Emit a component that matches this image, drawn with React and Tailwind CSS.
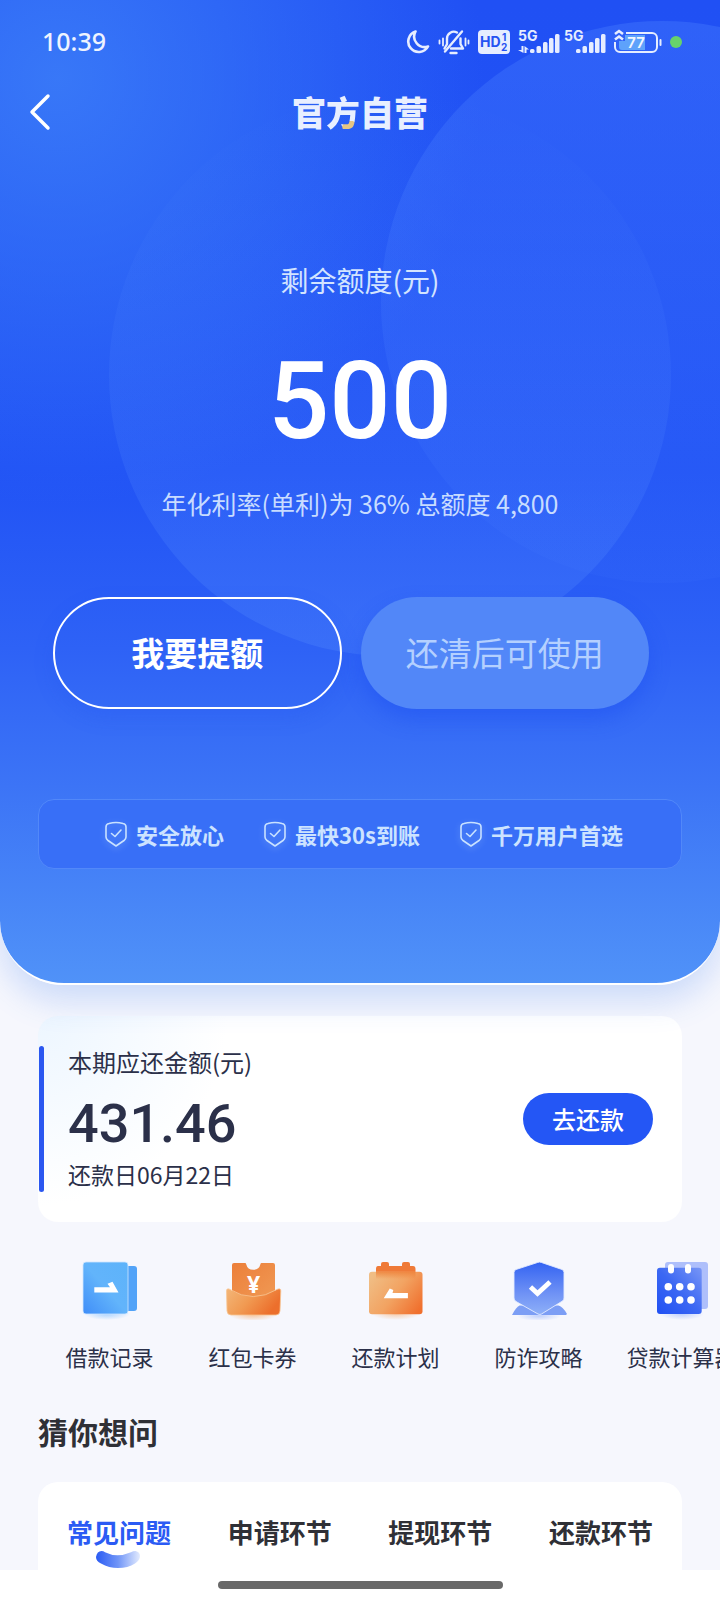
import { ChevronLeft } from "lucide-react";

const perks = ["安全放心", "最快30s到账", "千万用户首选"];

const tabs = ["常见问题", "申请环节", "提现环节", "还款环节"];

const services = [
  { label: "借款记录", Icon: RecordIcon },
  { label: "红包卡券", Icon: CouponIcon },
  { label: "还款计划", Icon: PlanIcon },
  { label: "防诈攻略", Icon: ShieldIcon },
  { label: "贷款计算器", Icon: CalculatorIcon },
];

/* ---------- status bar icons ---------- */

function MoonIcon() {
  return (
    <svg className="h-[26px] w-6" viewBox="0 0 24 26" fill="none">
      <path
        d="M9.500 2.500a10.500 10.500 0 1 0 12.500 15A10.500 10.500 0 0 1 9.500 2.500Z"
        stroke="#e6edff"
        strokeWidth="2.600"
        strokeLinejoin="round"
      />
    </svg>
  );
}

function MutedBellIcon() {
  return (
    <svg
      className="h-[26px] w-8"
      viewBox="0 0 32 26"
      fill="none"
      stroke="#e6edff"
      strokeWidth="2.400"
      strokeLinecap="round"
      strokeLinejoin="round"
    >
      <path d="M9 15V9.500a6.800 6.800 0 0 1 10-6" />
      <path d="M22.500 9.500V15l2.500 4.500H13" />
      <path d="M7 22.500L24 2.500" />
      <path d="M6.500 19.500l2-3.500" />
      <path d="M12.500 24h6" />
      <path d="M5 9.500v7M1.500 11.500v3M27.500 9.500v7M30.500 11.500v3" strokeWidth="1.800" />
    </svg>
  );
}

function HdIcon() {
  return (
    <svg className="h-6 w-8" viewBox="0 0 32 24">
      <rect x="0" y="0" width="32" height="24" rx="4" fill="#e6edff" />
      <g fill="#2553f2" fontFamily="Inter, sans-serif" fontWeight="700">
        <text x="2" y="17" fontSize="14">
          HD
        </text>
        <text x="24" y="11" fontSize="10">
          1
        </text>
        <text x="23" y="21" fontSize="10">
          2
        </text>
      </g>
    </svg>
  );
}

function SignalIcon({ data }) {
  return (
    <svg className="h-[26px] w-[42px] overflow-visible" viewBox="0 0 42 26" fill="#e6edff">
      <text
        x="0"
        y="12"
        fontSize="14"
        fontFamily="Inter, sans-serif"
        fontWeight="700"
      >
        5G
      </text>
      {data && (
        <path d="M3.500 17v4H0l5.500 3v-7ZM6.500 24v-7l4.500 3.500H8.500V24Z" />
      )}
      <rect x="12" y="20" width="4.500" height="4" rx="1.500" />
      <rect x="18.500" y="17" width="4.500" height="7" rx="1.500" />
      <rect x="25" y="13" width="4.500" height="11" rx="1.500" />
      <rect x="31" y="9" width="4.500" height="15" rx="1.500" />
      <rect x="37" y="5" width="4.500" height="19" rx="1.500" />
    </svg>
  );
}

function BatteryIcon() {
  return (
    <svg className="h-[26px] w-12" viewBox="0 0 48 26" fill="none">
      <path d="M11 6h20v15H8q-3 0-3-3v-6h6Z" fill="#5ea2fb" />
      <path
        d="M12 4h26a5 5 0 0 1 5 5v9a5 5 0 0 1-5 5H6a5 5 0 0 1-5-5v-5"
        stroke="#e6edff"
        strokeWidth="2"
      />
      <path d="M46.500 11v5" stroke="#e6edff" strokeWidth="2" strokeLinecap="round" />
      <path
        d="M1 5l4-3 4 3M1 10.500l4-3 4 3"
        stroke="#e6edff"
        strokeWidth="2.600"
      />
      <text
        x="22"
        y="19"
        fontSize="15"
        fontFamily="Inter, sans-serif"
        fontWeight="600"
        textAnchor="middle"
        fill="#f2f6ff"
      >
        77
      </text>
    </svg>
  );
}

/* ---------- page icons ---------- */

function PerkIcon() {
  return (
    <svg
      className="h-[26px] w-[22px] drop-shadow-[0_2px_3px_rgba(190,225,255,0.4)]"
      viewBox="0 0 22 26"
      fill="none"
      stroke="#c9e2ff"
      strokeWidth="1.600"
      strokeLinejoin="round"
      strokeLinecap="round"
    >
      <path d="M4 2.500Q11 .5 18 2.500Q21 3 21 6v10q0 2-2 3.500L11 25l-8-5.500Q1 18 1 16V6q0-3 3-3.500Z" />
      <path d="M6.500 12.500l3.500 3 6-6.500" />
    </svg>
  );
}

function RecordIcon() {
  return (
    <svg className="size-[60px]" viewBox="0 0 60 60">
      <defs>
        <linearGradient id="record" x1="0" y1="1" x2="1" y2="0">
          <stop offset="0" stopColor="#3f8df8" />
          <stop offset="0.500" stopColor="#62b4fb" />
          <stop offset="1" stopColor="#5db3fa" />
        </linearGradient>
        <radialGradient id="recordShadow">
          <stop offset="0" stopColor="#8cc4ff" stopOpacity="0.700" />
          <stop offset="1" stopColor="#8cc4ff" stopOpacity="0" />
        </radialGradient>
      </defs>
      <ellipse cx="27" cy="54" rx="23" ry="6" fill="url(#recordShadow)" />
      <rect x="44" y="6" width="13" height="45" rx="3" fill="#52a3f8" />
      <rect
        x="3"
        y="2"
        width="45"
        height="52"
        rx="3"
        fill="url(#record)"
        stroke="#cfe6ff"
        strokeWidth="0.800"
      />
      <path d="M14.300 27.300H30l-2.500-3.500 5-2 6 10.600H14.300Z" fill="#fff" />
    </svg>
  );
}

function CouponIcon() {
  return (
    <svg className="size-[60px]" viewBox="0 0 60 60">
      <defs>
        <linearGradient id="coupon" x1="0" y1="0" x2="1" y2="1">
          <stop offset="0" stopColor="#ec7f3a" />
          <stop offset="1" stopColor="#f09a55" />
        </linearGradient>
        <linearGradient id="pocket" x1="0" y1="0" x2="1" y2="0.400">
          <stop offset="0" stopColor="#f3b678" />
          <stop offset="0.500" stopColor="#f19a52" />
          <stop offset="1" stopColor="#ec6f2c" />
        </linearGradient>
        <radialGradient id="couponShadow">
          <stop offset="0" stopColor="#f5b27a" stopOpacity="0.700" />
          <stop offset="1" stopColor="#f5b27a" stopOpacity="0" />
        </radialGradient>
      </defs>
      <ellipse cx="30" cy="55" rx="24" ry="6" fill="url(#couponShadow)" />
      <path
        d="M11 3h11q1 0 1.200 1.200a7.300 7.300 0 0 0 14.200 0Q37.600 3 38.600 3H50q2 0 2 2v36H9V5q0-2 2-2Z"
        fill="url(#coupon)"
      />
      <path
        d="M3.500 31q0-3 3-1.800Q30 44 54.500 29.200 58 28 57.800 31L57 51q-.3 4-4 4H8q-3.700 0-4-4Z"
        fill="url(#pocket)"
        stroke="#f7c795"
        strokeWidth="0.800"
      />
      <text
        x="30.500"
        y="33"
        fontSize="23"
        fontFamily="'Noto Sans', sans-serif"
        fontWeight="700"
        textAnchor="middle"
        fill="#fff"
      >
        ¥
      </text>
    </svg>
  );
}

function PlanIcon() {
  return (
    <svg className="size-[60px]" viewBox="0 0 60 60">
      <defs>
        <linearGradient id="plan" x1="0" y1="0.200" x2="1" y2="0.800">
          <stop offset="0" stopColor="#f0bd84" />
          <stop offset="0.500" stopColor="#f2a362" />
          <stop offset="1" stopColor="#f0702e" />
        </linearGradient>
        <linearGradient id="planFold" x1="0" y1="0" x2="0" y2="1">
          <stop offset="0" stopColor="#ef8038" stopOpacity="0.800" />
          <stop offset="1" stopColor="#ef8038" stopOpacity="0" />
        </linearGradient>
        <radialGradient id="planShadow">
          <stop offset="0" stopColor="#f5b27a" stopOpacity="0.600" />
          <stop offset="1" stopColor="#f5b27a" stopOpacity="0" />
        </radialGradient>
      </defs>
      <ellipse cx="30" cy="54" rx="24" ry="6" fill="url(#planShadow)" />
      <path
        d="M12 6h3V4q0-2 2-2h4q2 0 2 2v2h13V4q0-2 2-2h4q2 0 2 2v2h3q2.500 0 2.500 3v6H10V9q0-3 2-3Z"
        fill="#ef7a38"
      />
      <rect x="3" y="11.700" width="53.500" height="42.500" rx="3" fill="url(#plan)" />
      <path d="M10 12h39.500v7H10Z" fill="url(#planFold)" />
      <path d="M17.700 38.200 23.800 28.500l3.500 1.500-.8 2.900h15.400v5.300Z" fill="#fff" />
    </svg>
  );
}

function ShieldIcon() {
  return (
    <svg className="size-[60px]" viewBox="0 0 60 60">
      <defs>
        <linearGradient id="shield" x1="0" y1="0" x2="0" y2="1">
          <stop offset="0" stopColor="#3363f2" />
          <stop offset="0.600" stopColor="#6f92f5" />
          <stop offset="1" stopColor="#8eb0f8" />
        </linearGradient>
        <radialGradient id="shieldShadow">
          <stop offset="0" stopColor="#a9c0fb" stopOpacity="0.700" />
          <stop offset="1" stopColor="#a9c0fb" stopOpacity="0" />
        </radialGradient>
      </defs>
      <ellipse cx="30" cy="56" rx="22" ry="5" fill="url(#shieldShadow)" />
      <path
        d="M3 55Q7 47 10.500 45.500H49.500Q54 47 57.700 53.500 58 55 56.500 55Z"
        fill="#7c9ef5"
      />
      <path
        d="M28.500 2.500q2-1 4 0L53 9.500q2 1 2 3V38q0 2-1.500 3L32.500 54q-1.500 1-3.500 0L7 41.500Q5 40 5 38V12.500q0-2 2-3Z"
        fill="url(#shield)"
        stroke="#e3ebff"
        strokeWidth="0.900"
      />
      <path d="M21.500 27l7 6.500L41 22" fill="none" stroke="#fff" strokeWidth="4.800" />
    </svg>
  );
}

function CalculatorIcon() {
  return (
    <svg className="size-[60px]" viewBox="0 0 60 60">
      <defs>
        <linearGradient id="calc" x1="0" y1="1" x2="1" y2="0">
          <stop offset="0" stopColor="#2050f3" />
          <stop offset="0.500" stopColor="#3c68f3" />
          <stop offset="1" stopColor="#7896f6" />
        </linearGradient>
        <radialGradient id="calcShadow">
          <stop offset="0" stopColor="#a9c0fb" stopOpacity="0.700" />
          <stop offset="1" stopColor="#a9c0fb" stopOpacity="0" />
        </radialGradient>
      </defs>
      <ellipse cx="30" cy="54" rx="22" ry="6" fill="url(#calcShadow)" />
      <rect x="13" y="2" width="43" height="47" rx="3" fill="#aebffb" />
      <rect x="5" y="7.700" width="44.700" height="46.300" rx="3" fill="url(#calc)" />
      <g fill="#fff">
        <rect x="16" y="4" width="6" height="9.500" rx="3" />
        <rect x="33" y="4" width="6" height="9.500" rx="3" />
        <circle cx="16.300" cy="26.700" r="3.800" />
        <circle cx="27.700" cy="26.700" r="3.800" />
        <circle cx="39" cy="26.700" r="3.800" />
        <circle cx="16.300" cy="40" r="3.800" />
        <circle cx="27.700" cy="40" r="3.800" />
        <circle cx="39" cy="40" r="3.800" />
      </g>
    </svg>
  );
}

function TabMarker() {
  return (
    <svg className="h-5 w-12" viewBox="0 0 48 20" fill="none">
      <defs>
        <linearGradient id="marker" x1="0" y1="0" x2="1" y2="0">
          <stop offset="0" stopColor="#2a5bf3" />
          <stop offset="0.500" stopColor="#7095f7" />
          <stop offset="1" stopColor="#e3ebfe" />
        </linearGradient>
      </defs>
      <path
        d="M1 7Q2 1 6.500 1q2 0 3.500 1.200 12 6 26 0Q38 1 40.500 1 45 2 45 6q0 4-5 7.500-7 4.500-17 4.500-9 0-17-4.500Q1 11 1 7Z"
        fill="url(#marker)"
      />
    </svg>
  );
}

/* ---------- sections ---------- */

function StatusBar() {
  return (
    <div className="flex h-[84px] items-center justify-between pl-[42px] pr-[38px]">
      <span className="font-['Noto_Sans',sans-serif] text-[25px] font-medium text-[#eef3ff]">
        10:39
      </span>
      <div className="flex items-center gap-2">
        <MoonIcon />
        <MutedBellIcon />
        <HdIcon />
        <div className="flex items-center gap-1">
          <SignalIcon data />
          <SignalIcon />
        </div>
        <BatteryIcon />
        <span className="size-3 rounded-full bg-[#67d26b]" />
      </div>
    </div>
  );
}

function Hero() {
  return (
    <section className="relative overflow-hidden rounded-b-[64px] border-b-2 border-white bg-[radial-gradient(circle_at_8%_8%,rgba(60,126,248,0.85)_0,rgba(60,126,248,0)_38%),linear-gradient(180deg,#2050f4_0%,#2153f5_48%,#2e62f6_66%,#3c74f6_80%,#5092f8_100%)] pb-[114px] text-white shadow-[0_16px_32px_rgba(70,130,240,0.24)]">
      {/* Background circles */}
      <div className="absolute left-1/2 top-[94px] -ml-[251px] size-[562px] rounded-full bg-linear-to-b from-[#5a92ff]/0 to-[#5a92ff]/26" />
      <div className="absolute left-1/2 top-[21px] ml-[21px] size-[562px] rounded-full bg-linear-to-b from-[#4a80ff]/36 to-[#4a80ff]/8" />

      <div className="relative">
        <StatusBar />

        <header className="grid h-14 grid-cols-3 items-center">
          <button aria-label="返回" className="flex h-14 w-fit items-center pl-2">
            <ChevronLeft className="size-16" strokeWidth={1.300} />
          </button>
          <h1 className="text-center text-[34px] font-black leading-10 text-[#e8efff]">
            官
            <span className="bg-[radial-gradient(circle_at_72%_88%,#e6c583_0_18%,#e8efff_19%)] bg-clip-text text-transparent">
              方
            </span>
            自营
          </h1>
        </header>

        {/* Remaining limit */}
        <div className="mt-30 text-center">
          <p className="text-[28px] leading-10 text-[#d3e4ff]">剩余额度(元)</p>
          <p className="mt-[45px] font-['Roboto',sans-serif] text-[108px] font-medium leading-[112px]">
            500
          </p>
          <p className="mt-7 text-[25px] leading-9 text-[#c8dcff]">
            年化利率(单利)为 36% 总额度 4,800
          </p>
        </div>

        {/* Actions */}
        <div className="mt-[76px] grid grid-cols-2 gap-[19px] pl-[53px] pr-[71px] text-[33px]">
          <button className="h-28 rounded-full border-2 border-white font-bold shadow-[0_8px_20px_rgba(30,80,240,0.2)]">
            我要提额
          </button>
          <button
            disabled
            className="h-28 rounded-full bg-[#5287f8] text-[#b4d0ff] shadow-[0_10px_20px_rgba(26,76,240,0.4)]"
          >
            还清后可使用
          </button>
        </div>

        {/* Perks */}
        <ul className="mx-[38px] mt-[90px] flex h-[70px] items-center justify-center gap-10 rounded-2xl border border-[#5288f9] bg-[#386ff7] pl-2">
          {perks.map((perk) => (
            <li key={perk} className="flex items-center gap-[9px]">
              <PerkIcon />
              <span className="text-[22px] font-bold text-[#cce3ff]">{perk}</span>
            </li>
          ))}
        </ul>
      </div>
    </section>
  );
}

function RepayCard() {
  return (
    <section className="mx-[38px] mt-[31px] flex items-center justify-between rounded-[20px] bg-white bg-[radial-gradient(circle_at_0%_0%,#edf6ff_0,#ffffff_28%)] pb-[30px] pr-[29px] pt-[30px]">
      <div className="flex items-center">
        <span className="mx-px h-[146px] w-[5px] rounded-full bg-[#2b57f0]" />
        <div className="ml-[23px] text-[#2b3049]">
          <p className="text-[24px] leading-8">本期应还金额(元)</p>
          <p className="mt-[14px] font-['Roboto',sans-serif] text-[54px] font-medium leading-16">
            431.46
          </p>
          <p className="text-[23px] leading-9">还款日06月22日</p>
        </div>
      </div>
      <button className="h-[52px] w-[130px] rounded-full bg-[#2456f5] text-[24px] font-medium text-white">
        去还款
      </button>
    </section>
  );
}

function Services() {
  return (
    <nav className="mt-[38px] flex overflow-hidden pl-[38px]">
      {services.map(({ label, Icon }) => (
        <a
          key={label}
          href="#"
          className="flex w-[143px] shrink-0 flex-col items-center gap-[18px]"
        >
          <Icon />
          <span className="whitespace-nowrap text-[22px] leading-9 text-[#2b3049]">
            {label}
          </span>
        </a>
      ))}
    </nav>
  );
}

function Questions() {
  return (
    <section className="mx-[38px] mt-[37px]">
      <h2 className="text-[30px] font-bold leading-10 text-[#2f3036]">猜你想问</h2>
      <div className="mt-[31px] flex justify-between rounded-t-[20px] bg-white px-[29px] pt-8">
        {tabs.map((tab, i) => (
          <button
            key={tab}
            className={
              i === 0
                ? "flex h-14 flex-col items-center text-[26px] font-bold leading-9 text-[#2b5bf4]"
                : "flex h-14 flex-col items-center text-[26px] font-bold leading-9 text-[#2f3036]"
            }
          >
            {tab}
            {i === 0 && <TabMarker />}
          </button>
        ))}
      </div>
    </section>
  );
}

export default function App() {
  return (
    <div className="overflow-hidden bg-[#f6f7fd] font-['Noto_Sans_CJK_SC',sans-serif]">
      <Hero />
      <RepayCard />
      <Services />
      <Questions />

      {/* Gesture bar */}
      <footer className="flex h-[30px] items-center justify-center bg-white">
        <span className="h-2 w-[285px] rounded-full bg-[#696969]" />
      </footer>
    </div>
  );
}
